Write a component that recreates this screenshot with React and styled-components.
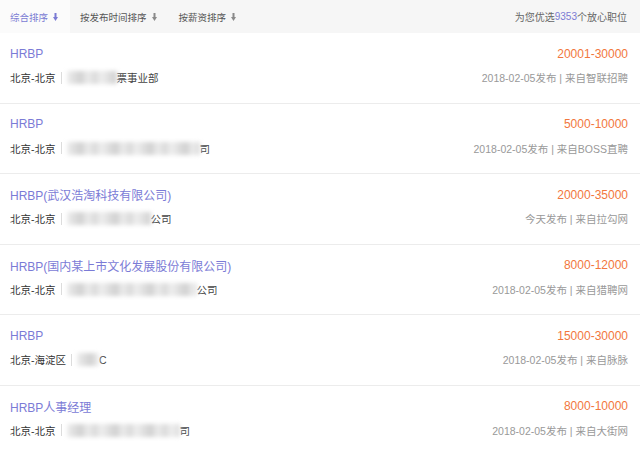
import styled, { createGlobalStyle } from "styled-components";

const GlobalStyle = createGlobalStyle`
  body {
    margin: 0;
    background: #fff;
    font-family: "Liberation Sans", "Noto Sans CJK SC", sans-serif;
  }
`;

const jobs = [
  { title: "HRBP", salary: "20001-30000", city: "北京-北京", blur: 50, tail: "票事业部", date: "2018-02-05发布", from: "来自智联招聘" },
  { title: "HRBP", salary: "5000-10000", city: "北京-北京", blur: 133, tail: "司", date: "2018-02-05发布", from: "来自BOSS直聘" },
  { title: "HRBP(武汉浩淘科技有限公司)", salary: "20000-35000", city: "北京-北京", blur: 84, tail: "公司", date: "今天发布", from: "来自拉勾网" },
  { title: "HRBP(国内某上市文化发展股份有限公司)", salary: "8000-12000", city: "北京-北京", blur: 130, tail: "公司", date: "2018-02-05发布", from: "来自猎聘网" },
  { title: "HRBP", salary: "15000-30000", city: "北京-海淀区", blur: 22, tail: "C", date: "2018-02-05发布", from: "来自脉脉" },
  { title: "HRBP人事经理", salary: "8000-10000", city: "北京-北京", blur: 113, tail: "司", date: "2018-02-05发布", from: "来自大街网" },
];

function Arrow({ color }) {
  return (
    <svg width="5" height="8" viewBox="0 0 5 8">
      <rect x="1.5" y="0" width="2" height="4" fill={color} />
      <polygon points="0,4 5,4 2.5,8" fill={color} />
    </svg>
  );
}

function App() {
  const tabs = ["综合排序", "按发布时间排序", "按薪资排序"];
  return (
    <Page>
      <GlobalStyle />
      <SortBar>
        {tabs.map((t, i) => (
          <Tab key={t} active={i === 0}>
            {t}
            <Arrow color={i === 0 ? "#7b7bd4" : "#8a8a8a"} />
          </Tab>
        ))}
        <Count>
          为您优选<em>9353</em>个放心职位
        </Count>
      </SortBar>
      {jobs.map((job, i) => (
        <Row key={i}>
          <Line>
            <Title>{job.title}</Title>
            <Salary>{job.salary}</Salary>
          </Line>
          <Line>
            <Place>
              {job.city}
              <Sep />
              <Blurred style={{ width: job.blur }} />
              <Tail>{job.tail}</Tail>
            </Place>
            <Meta>
              {job.date} | {job.from}
            </Meta>
          </Line>
        </Row>
      ))}
    </Page>
  );
}

const Page = styled.div`
  width: 640px;
  height: 452px;
  overflow: hidden;
  background: #fff;
`;

const SortBar = styled.div`
  display: flex;
  align-items: stretch;
  height: 33px;
  background: #f6f6f6;
  font-size: 9.5px;
`;

const Tab = styled.div`
  display: flex;
  align-items: center;
  gap: 5px;
  padding: 0 12px 0 10px;
  color: ${(p) => (p.active ? "#7b7bd4" : "#555")};
  background: ${(p) => (p.active ? "#fbfbfb" : "transparent")};
`;

const Count = styled.div`
  margin-left: auto;
  display: flex;
  align-items: center;
  padding-right: 13px;
  color: #666;
  font-size: 10px;

  em {
    font-style: normal;
    color: #7b7bd4;
  }
`;

const Row = styled.div`
  box-sizing: border-box;
  height: 70.5px;
  padding: 12px 12px 0 10px;
  border-bottom: 1px solid #ececec;
  display: flex;
  flex-direction: column;
  gap: 7px;
`;

const Line = styled.div`
  display: flex;
  justify-content: space-between;
  align-items: center;
  height: 17px;
`;

const Title = styled.div`
  color: #7b7bd6;
  font-size: 12px;
`;

const Salary = styled.div`
  color: #f2773d;
  font-size: 12px;
`;

const Place = styled.div`
  display: flex;
  align-items: center;
  color: #333;
  font-size: 10.5px;
`;

const Sep = styled.span`
  display: inline-block;
  width: 1px;
  height: 12px;
  background: #dcdcdc;
  margin: 0 4px 0 5px;
`;

const Blurred = styled.span`
  display: inline-block;
  height: 13px;
  margin-left: 1px;
  background: repeating-linear-gradient(
    90deg,
    #eeeeee 0px,
    #dedede 7px,
    #d2d2d2 14px,
    #ececec 21px,
    #dadada 28px,
    #f0f0f0 35px
  );
  filter: blur(2px);
`;

const Tail = styled.span`
  color: #444;
`;

const Meta = styled.div`
  color: #999;
  font-size: 10.5px;
`;

export default App;
